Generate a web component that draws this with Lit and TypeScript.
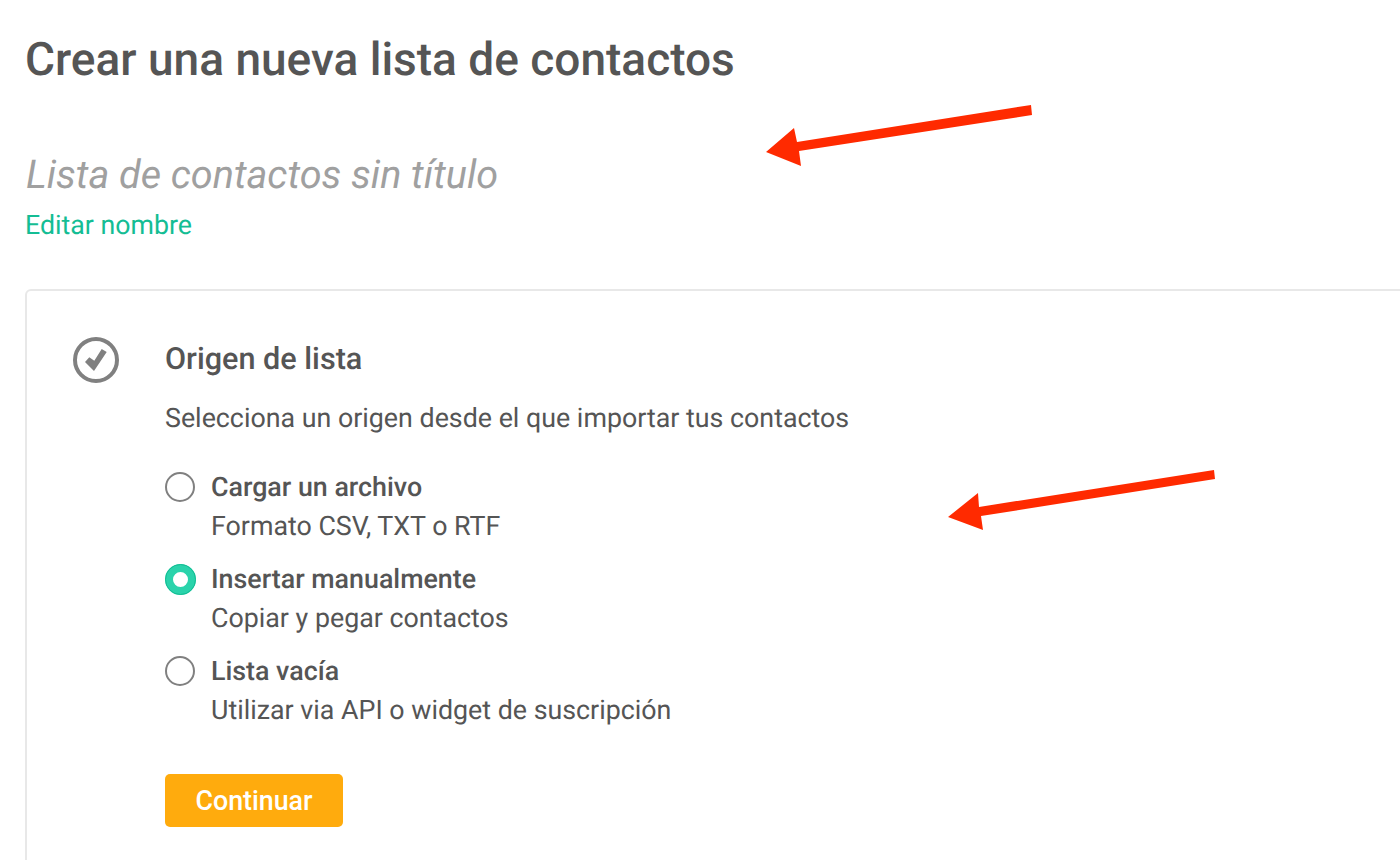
import { LitElement, html, css, svg } from "lit";
import { customElement } from "lit/decorators.js";

const options = [
  { title: "Cargar un archivo", sub: "Formato CSV, TXT o RTF", on: false },
  { title: "Insertar manualmente", sub: "Copiar y pegar contactos", on: true },
  { title: "Lista vacía", sub: "Utilizar via API o widget de suscripción", on: false },
];

@customElement("app-root")
export class AppRoot extends LitElement {
  static styles = css`
    :host {
      display: block;
      position: relative;
      width: 1400px;
      height: 860px;
      overflow: hidden;
      background: #fff;
      color: #555;
      font-family: Roboto, "Liberation Sans", sans-serif;
      text-rendering: geometricPrecision;
    }
    .page {
      display: flex;
      flex-direction: column;
      padding: 35px 0 0 25px;
      width: 1500px;
    }
    h1 {
      margin: 0;
      font-size: 46px;
      line-height: 50px;
      font-weight: 500;
    }
    .name {
      margin: 65px 0 0 1px;
      font-size: 39.6px;
      line-height: 50px;
      font-style: italic;
      font-weight: 400;
      color: #a0a0a0;
    }
    .edit {
      margin-top: 10px;
      font-size: 26.75px;
      line-height: 30px;
      color: #14bd94;
    }
    .card {
      margin-top: 49px;
      height: 700px;
      display: flex;
      border: 2px solid #e8e8e8;
      border-radius: 6px;
      padding: 47px 0 0 46px;
    }
    .check {
      width: 46px;
      height: 46px;
      flex: none;
      margin-top: -1px;
    }
    .body {
      margin-left: 46px;
      display: flex;
      flex-direction: column;
      align-items: flex-start;
    }
    h2 {
      margin: 0;
      font-size: 30.6px;
      line-height: 44px;
      font-weight: 500;
    }
    .lead {
      margin-top: 20px;
      font-size: 26.8px;
      line-height: 32px;
    }
    .options {
      margin-top: 35px;
      display: flex;
      flex-direction: column;
      gap: 14px;
    }
    .opt {
      display: flex;
      gap: 16px;
    }
    .radio {
      width: 30px;
      height: 30px;
      flex: none;
      box-sizing: border-box;
      border: 2px solid #808080;
      border-radius: 50%;
      background: #fff;
      margin-top: 3px;
    }
    .radio.on {
      width: 31px;
      height: 31px;
      margin-right: -1px;
      border: 8px solid #2ad3ab;
      outline: 1px solid #14bd94;
      outline-offset: -1px;
    }
    .opt-title {
      font-size: 26.8px;
      line-height: 36px;
      font-weight: 500;
    }
    .opt-sub {
      font-size: 26.8px;
      line-height: 42px;
    }
    .btn {
      margin-top: 43px;
      width: 178px;
      height: 53px;
      border: 0;
      border-radius: 5px;
      background: #ffab0d;
      color: #fff;
      font: 500 26.8px Roboto, "Liberation Sans", sans-serif;
      padding: 0;
    }
    .arrows {
      position: absolute;
      inset: 0;
      pointer-events: none;
    }
  `;

  render() {
    return html`
      <div class="page">
        <h1>Crear una nueva lista de contactos</h1>
        <div class="name">Lista de contactos sin título</div>
        <div class="edit">Editar nombre</div>
        <div class="card">
          <svg class="check" viewBox="0 0 46 46">
            <circle cx="23" cy="23" r="21" fill="none" stroke="#808080" stroke-width="4" />
            <path d="M12 25 L16.3 20.3 L21.3 23.7 L28.7 12 L33.7 15 L21 34 Z" fill="#808080" />
          </svg>
          <div class="body">
            <h2>Origen de lista</h2>
            <div class="lead">Selecciona un origen desde el que importar tus contactos</div>
            <div class="options">
              ${options.map(
                (o) => html`
                  <div class="opt">
                    <span class="radio ${o.on ? "on" : ""}"></span>
                    <div>
                      <div class="opt-title">${o.title}</div>
                      <div class="opt-sub">${o.sub}</div>
                    </div>
                  </div>
                `
              )}
            </div>
            <button class="btn">Continuar</button>
          </div>
        </div>
      </div>
      <svg class="arrows" viewBox="0 0 1400 860" width="1400" height="860">
        ${svg`<polygon fill="#ff2a00" points="1031,105 1032,115 799,151 801,166 766,152 794,128 797,142" />
        <polygon fill="#ff2a00" points="1214,470 1215,479 981,516 983,530 948,517 978,493 979,507" />`}
      </svg>
    `;
  }
}
